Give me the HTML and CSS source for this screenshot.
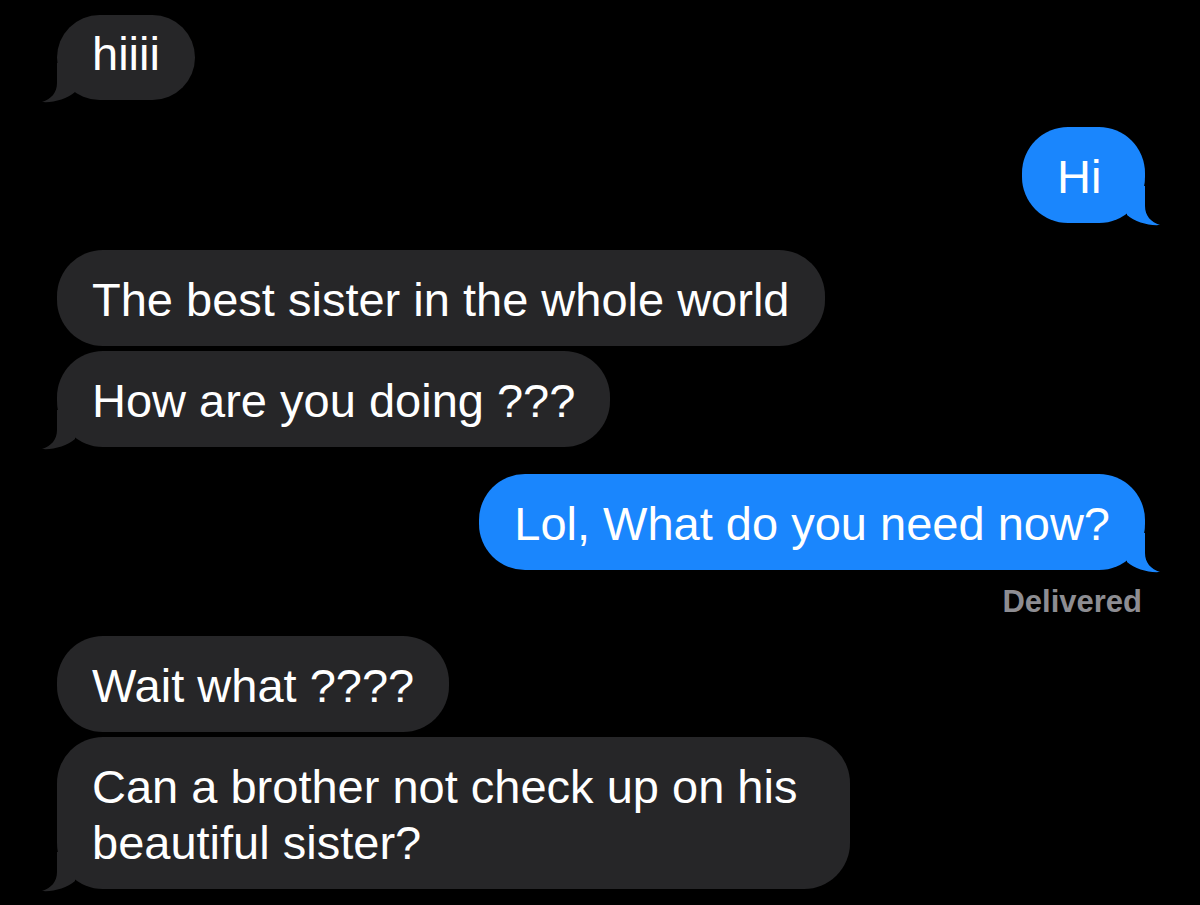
FILE: index.html
```html
<!DOCTYPE html>
<html lang="en">
<head>
<meta charset="utf-8">
<title>Messages</title>
<link rel="stylesheet" href="styles.css">
</head>
<body>
<main class="thread">
  <div class="bubble in first">hiiii<svg class="tail" viewBox="0 0 50 40" width="50" height="40"><path d="M16,0 L16,20 C16,30 10,36 1,39 C12,40 26,36 34,29 L34,0 Z"/></svg></div>

  <div class="bubble out min gap-l">Hi<svg class="tail" viewBox="0 0 50 40" width="50" height="40"><path d="M16,0 L16,20 C16,30 10,36 1,39 C12,40 26,36 34,29 L34,0 Z"/></svg></div>

  <div class="bubble in gap-l">The best sister in the whole world</div>
  <div class="bubble in gap-s">How are you doing ???<svg class="tail" viewBox="0 0 50 40" width="50" height="40"><path d="M16,0 L16,20 C16,30 10,36 1,39 C12,40 26,36 34,29 L34,0 Z"/></svg></div>

  <div class="bubble out gap-l">Lol, What do you need now?<svg class="tail" viewBox="0 0 50 40" width="50" height="40"><path d="M16,0 L16,20 C16,30 10,36 1,39 C12,40 26,36 34,29 L34,0 Z"/></svg></div>
  <div class="status">Delivered</div>

  <div class="bubble in gap-m">Wait what ????</div>
  <div class="bubble in gap-s wide">Can a brother not check up on his beautiful sister?<svg class="tail" viewBox="0 0 50 40" width="50" height="40"><path d="M16,0 L16,20 C16,30 10,36 1,39 C12,40 26,36 34,29 L34,0 Z"/></svg></div>
</main>
</body>
</html>
```

FILE: styles.css
```css
html, body {
  margin: 0;
  padding: 0;
  background: #000;
  height: 905px;
  overflow: hidden;
}

.thread {
  display: flex;
  flex-direction: column;
  align-items: flex-start;
  padding: 15px 55px 0 57px;
  font-family: "Liberation Sans", Arial, sans-serif;
  color: #fff;
}

.bubble {
  position: relative;
  box-sizing: border-box;
  font-size: 47px;
  line-height: 56px;
  padding: 22px 35px 18px;
  border-radius: 46px;
  max-width: 793px;
}

.bubble.first {
  padding-top: 11px;
}

.bubble.in {
  background: #262628;
  color: #fff;
  fill: #262628;
}

.bubble.out {
  align-self: flex-end;
  background: #1a86fd;
  fill: #1a86fd;
}

.bubble.min {
  min-width: 123px;
}

.gap-s { margin-top: 5px; }
.gap-m { margin-top: 16px; }
.gap-l { margin-top: 27px; }

.tail {
  position: absolute;
  bottom: -3px;
  left: -16px;
  display: block;
}

.bubble.out .tail {
  left: auto;
  right: -16px;
  transform: scaleX(-1);
}

.status {
  align-self: flex-end;
  margin-top: 14px;
  margin-right: 3px;
  font-size: 31px;
  line-height: 36px;
  font-weight: 700;
  color: #8d8d92;
}
```
